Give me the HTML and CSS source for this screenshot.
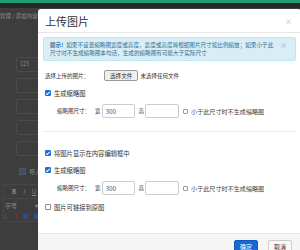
FILE: index.html
```html
<!DOCTYPE html>
<html lang="zh-CN">

<head>
    <meta charset="UTF-8">
    <meta name="viewport" content="width=device-width, initial-scale=1.0">
    <title>上传图片</title>
    <link rel="stylesheet" href="styles.css">
</head>

<body>
    <div class="page">
        <div class="topbar"></div>
        <div class="crumbs">管理 / 添加内容</div>
        <div class="page-form">
            <div class="pf-input">123</div>
            <div class="pf-input"></div>
            <div class="pf-input"></div>
            <div class="pf-input"></div>
            <div class="pf-input"></div>
            <div class="pf-check"><span class="pf-box"></span>导入</div>
            <div class="editor">
                <div class="tools"><b>B</b><i>I</i><u>U</u></div>
                <div class="fontsize">字号 <span class="caret">▾</span></div>
                <div class="icons"><span class="ic-a">A</span><span class="ic-t">T</span><span class="ic"></span><span class="ic"></span></div>
            </div>
        </div>
    </div>

    <div class="modal">
        <div class="modal-header">
            <h4 class="modal-title">上传图片</h4>
            <span class="close">×</span>
        </div>
        <div class="modal-body">
            <div class="alert">
                <b class="alert-tag">提示!</b>如果不设置缩略图宽度或高度，宽度或高度将根据图片尺寸按比例缩放；如果小于此尺寸时不生成缩略图本句话，生成的缩略图有可能大于实际尺寸
                <span class="alert-close">×</span>
            </div>

            <div class="form-row row-file">
                <span class="lbl-file">选择上传的图片：</span>
                <span class="file-btn">选择文件</span>
                <span class="file-none">未选择任何文件</span>
            </div>

            <div class="check-row"><span class="cb on"></span>生成缩略图</div>
            <div class="size-row">
                <span>缩略图尺寸：</span>
                <span class="unit">宽</span>
                <span class="size-input">300</span>
                <span class="unit unit-h">高</span>
                <span class="size-input wide"></span>
                <span class="cb small"></span>
                <span class="hint">小于此尺寸时不生成缩略图</span>
            </div>

            <div class="divider"></div>

            <div class="check-row first"><span class="cb on"></span>将图片显示在内容编辑框中</div>
            <div class="check-row"><span class="cb on"></span>生成缩略图</div>
            <div class="size-row">
                <span>缩略图尺寸：</span>
                <span class="unit">宽</span>
                <span class="size-input">300</span>
                <span class="unit unit-h">高</span>
                <span class="size-input wide"></span>
                <span class="cb small"></span>
                <span class="hint">小于此尺寸时不生成缩略图</span>
            </div>
            <div class="check-row"><span class="cb"></span>图片可链接到原图</div>
        </div>
        <div class="modal-footer">
            <span class="btn btn-primary">确定</span>
            <span class="btn btn-default">取消</span>
        </div>
    </div>
</body>

</html>
```

FILE: styles.css
```css
body {
    margin: 0;
    width: 300px;
    height: 250px;
    overflow: hidden;
    position: relative;
    background: #3d3d3d;
    font-family: "Noto Sans CJK SC", "Noto Sans", sans-serif;
}

/* page behind the dialog (already dimmed) */
.page {
    height: 250px;
    overflow: hidden;
}

.topbar {
    height: 3px;
    background: #1e9b6f;
    border-bottom: 5px solid #262626;
}

.crumbs {
    padding-top: 4px;
    font-size: 5.5px;
    line-height: 8px;
    color: #8c8c8c;
    white-space: nowrap;
}

.page-form {
    margin-top: 37px;
    padding-left: 16px;
}

.pf-input {
    width: 200px;
    height: 13px;
    margin-bottom: 6px;
    padding-left: 3px;
    border: 1px solid #4b4b4b;
    border-radius: 2px;
    font-size: 5.5px;
    line-height: 13px;
    color: #8a8a8a;
}

.pf-check {
    display: flex;
    align-items: center;
    height: 10px;
    margin-top: 10px;
    padding-left: 3px;
    font-size: 6px;
    color: #8a8a8a;
}

.pf-box {
    width: 5px;
    height: 5px;
    margin-right: 3px;
    background: #3a4f6e;
    border: 1px solid #555;
}

.editor {
    margin: 8px 0 0 -13px;
    width: 220px;
    border: 1px solid #474747;
    font-size: 6px;
    color: #8a8a8a;
}

.tools {
    display: flex;
    gap: 7px;
    padding: 2px 0 2px 8px;
    border-bottom: 1px solid #474747;
}

.fontsize {
    padding: 2px 0 2px 1px;
    width: 33px;
    display: flex;
    justify-content: space-between;
}

.icons {
    display: flex;
    align-items: center;
    gap: 6px;
    height: 9px;
}

.ic-a {
    color: #3c5c86;
}

.ic-t {
    color: #8a2a2a;
    font-weight: bold;
}

.ic {
    width: 5px;
    height: 5px;
    background: #2d4e86;
}

/* dialog */
.modal {
    position: absolute;
    left: 38px;
    top: 9px;
    width: 263px;
    height: 241px;
    overflow: hidden;
    background: #fff;
    border-radius: 3px 3px 0 0;
}

.modal-header {
    display: flex;
    align-items: center;
    height: 23px;
    padding: 0 9px 0 7px;
    border-bottom: 1px solid #e5e5e5;
}

.modal-title {
    margin: 0;
    font-size: 11px;
    font-weight: normal;
    color: #333;
}

.close {
    margin-left: auto;
    font-size: 7px;
    color: #b5b5b5;
}

.modal-body {
    padding: 4px 5px 21px;
}

.alert {
    position: relative;
    padding: 3px 20px 3px 6px;
    margin-bottom: 9px;
    background: #d9edf7;
    border: 1px solid #bce8f1;
    border-radius: 2px;
    color: #31708f;
    font-size: 5.6px;
    line-height: 8px;
}

.alert-tag {
    margin-right: 3px;
}

.alert-close {
    position: absolute;
    right: 8px;
    top: 3px;
    font-size: 7px;
    color: #8aa9ba;
}

.form-row {
    display: flex;
    align-items: center;
    padding-left: 2px;
    font-size: 5.5px;
    color: #333;
}

.row-file {
    height: 11px;
}

.lbl-file {
    width: 59px;
}

.file-btn {
    display: flex;
    align-items: center;
    height: 11px;
    box-sizing: border-box;
    padding: 0 5px;
    border: 1px solid #9a9a9a;
    border-radius: 2px;
    background: #efefef;
    font-size: 5.6px;
}

.file-none {
    margin-left: 2px;
}

.check-row {
    display: flex;
    align-items: center;
    height: 10px;
    margin-top: 7px;
    padding-left: 2px;
    font-size: 6.3px;
    color: #333;
}

.check-row.first {
    margin-top: 16px;
}

.cb {
    position: relative;
    width: 6px;
    height: 6px;
    box-sizing: border-box;
    margin-right: 3px;
    border: 1px solid #8a8a8a;
    border-radius: 1px;
    background: #fff;
}

.cb.on {
    background: #1b6fd8;
    border-color: #1b6fd8;
}

.cb.on::after {
    content: "";
    position: absolute;
    left: 1px;
    top: 0;
    width: 1px;
    height: 3px;
    border: solid #fff;
    border-width: 0 1px 1px 0;
    transform: rotate(45deg);
}

.cb.small {
    width: 5px;
    height: 5px;
    margin-left: 4px;
    border-color: #999;
}

.size-row {
    display: flex;
    align-items: center;
    height: 14px;
    margin-top: 6px;
    padding-left: 14px;
    font-size: 5.5px;
    color: #333;
}

.unit {
    margin: 0 1px 0 5px;
}

.unit-h {
    margin-left: 4px;
}

.size-input {
    display: flex;
    align-items: center;
    width: 33px;
    height: 14px;
    box-sizing: border-box;
    padding-left: 3px;
    border: 1px solid #ccc;
    border-radius: 2px;
    font-size: 6.4px;
    color: #555;
}

.size-input.wide {
    width: 34px;
}

.hint {
    font-size: 6.1px;
    color: #444;
}

.divider {
    height: 1px;
    margin-top: 13px;
    background: #eee;
}

.modal-footer {
    display: flex;
    justify-content: flex-end;
    gap: 10px;
    padding: 6px 9px 7px;
    background: #f5f5f5;
    border-top: 1px solid #e5e5e5;
}

.btn {
    display: flex;
    align-items: center;
    justify-content: center;
    width: 24px;
    height: 13px;
    box-sizing: border-box;
    border-radius: 2px;
    font-size: 6px;
}

.btn-primary {
    background: #1a6ad2;
    border: 1px solid #0f5bbf;
    color: #fff;
}

.btn-default {
    background: #f8f8f8;
    border: 1px solid #ccc;
    color: #333;
}
```
